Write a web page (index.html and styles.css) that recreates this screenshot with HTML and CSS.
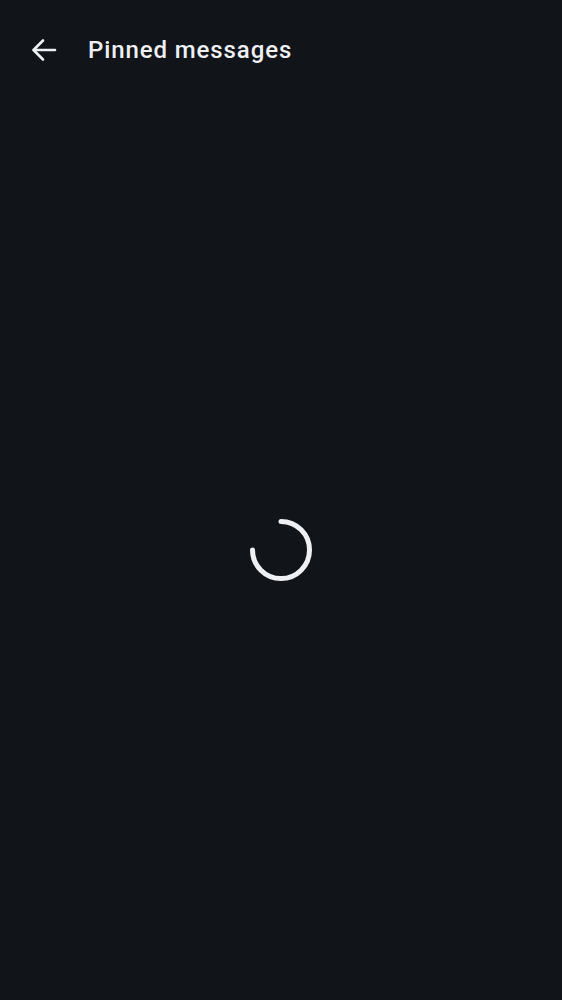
FILE: index.html
```html
<!DOCTYPE html>
<html>
<head>
<meta charset="utf-8">
<link rel="stylesheet" href="styles.css">
</head>
<body>
<div class="page">
  <header class="topbar">
    <button class="back" aria-label="Back">
      <svg width="26" height="24" viewBox="0 0 26 24" fill="none" stroke="#eef0f4" stroke-width="2.6" stroke-linecap="round" stroke-linejoin="round">
        <path d="M24 12H3"/>
        <path d="M12 2.5L2.5 12L12 21.5"/>
      </svg>
    </button>
    <h1 class="title">Pinned messages</h1>
  </header>
  <main class="content">
    <svg class="spinner" width="64" height="64" viewBox="0 0 64 64" fill="none">
      <path d="M32 3.5 A28.5 28.5 0 1 1 3.5 32" stroke="#eef0f4" stroke-width="5" stroke-linecap="round"/>
    </svg>
  </main>
</div>
</body>
</html>
```
FILE: styles.css
```css
html, body {
  margin: 0;
  padding: 0;
  background: #111418;
}
.page {
  width: 562px;
  height: 1000px;
  display: flex;
  flex-direction: column;
  font-family: Roboto, "Noto Sans", sans-serif;
  color: #eef0f4;
}
.topbar {
  height: 100px;
  display: flex;
  align-items: center;
  padding-left: 31px;
  box-sizing: border-box;
}
.back {
  background: none;
  border: 0;
  padding: 0;
  width: 26px;
  height: 24px;
  display: flex;
  align-items: center;
  justify-content: center;
  margin-right: 31px;
}
.title {
  margin: 0;
  font-size: 24px;
  font-weight: 500;
  letter-spacing: 0.9px;
}
.content {
  flex: 1;
  display: flex;
  align-items: center;
  justify-content: center;
}
.spinner {
  margin-top: -1px;
}
```
